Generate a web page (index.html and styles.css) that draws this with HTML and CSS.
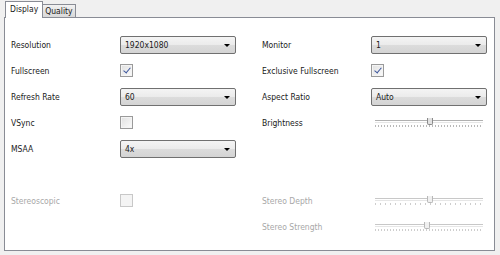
FILE: index.html
```html
<!DOCTYPE html>
<html lang="en">
<head>
    <meta charset="UTF-8">
    <title>Display Settings</title>
    <link rel="stylesheet" href="styles.css">
</head>
<body>
    <div class="window">
        <div class="tabs">
            <div class="tab active">Display</div>
            <div class="tab">Quality</div>
        </div>
        <div class="pane">
            <div class="label">Resolution</div>
            <div class="combo">1920x1080</div>
            <div class="spacer"></div>
            <div class="label">Monitor</div>
            <div class="combo">1</div>

            <div class="label">Fullscreen</div>
            <div class="cell"><span class="check checked"></span></div>
            <div class="spacer"></div>
            <div class="label">Exclusive Fullscreen</div>
            <div class="cell"><span class="check checked"></span></div>

            <div class="label">Refresh Rate</div>
            <div class="combo">60</div>
            <div class="spacer"></div>
            <div class="label">Aspect Ratio</div>
            <div class="combo">Auto</div>

            <div class="label">VSync</div>
            <div class="cell"><span class="check"></span></div>
            <div class="spacer"></div>
            <div class="label">Brightness</div>
            <div class="cell"><div class="slider dense"><span class="thumb" style="left: 50%"></span></div></div>

            <div class="label">MSAA</div>
            <div class="combo">4x</div>
            <div class="spacer"></div>
            <div class="label"></div>
            <div class="cell"></div>

            <div class="label"></div>
            <div class="cell"></div>
            <div class="spacer"></div>
            <div class="label"></div>
            <div class="cell"></div>

            <div class="label disabled">Stereoscopic</div>
            <div class="cell"><span class="check disabled"></span></div>
            <div class="spacer"></div>
            <div class="label disabled">Stereo Depth</div>
            <div class="cell"><div class="slider sparse disabled"><span class="thumb" style="left: 50%"></span></div></div>

            <div class="label"></div>
            <div class="cell"></div>
            <div class="spacer"></div>
            <div class="label disabled">Stereo Strength</div>
            <div class="cell"><div class="slider dense disabled"><span class="thumb" style="left: 47%"></span></div></div>
        </div>
    </div>
</body>
</html>
```
FILE: styles.css
```css
body {
    margin: 0;
    background-color: #f0f0f0;
    font-family: Tahoma, "DejaVu Sans Condensed", "Liberation Sans", sans-serif;
    font-size: 8.5px;
    color: #1a1a1a;
}
.window {
    padding: 1px 5px 4px 4px;
}
.tabs {
    display: flex;
    align-items: flex-end;
    height: 16px;
    padding-left: 1px;
}
.tab {
    height: 12px;
    line-height: 12px;
    padding: 0 2px;
    border: 1px solid #898c95;
    border-bottom: none;
    background: linear-gradient(#f2f2f2, #e3e3e3 50%, #d9d9d9);
    margin-left: -1px;
}
.tab.active {
    height: 16px;
    line-height: 15px;
    padding: 0 4px;
    background: #fff;
    margin-left: 0;
    margin-bottom: -1px;
    position: relative;
    z-index: 1;
}
.pane {
    background: #fff;
    border: 1px solid #898c95;
    padding: 14px 0 10px 6px;
    display: grid;
    grid-template-columns: 109px 116px 26px 109px 116px;
    grid-auto-rows: 26px;
    height: 208px;
}
.label {
    display: flex;
    align-items: center;
    white-space: nowrap;
}
.label.disabled {
    color: #a8a8a8;
}
.cell {
    display: flex;
    align-items: center;
}
.combo {
    align-self: center;
    height: 16px;
    line-height: 16px;
    padding-left: 4px;
    border: 1px solid #707070;
    border-radius: 2px;
    background: linear-gradient(#f4f4f4, #ebebeb 50%, #dcdcdc 51%, #d4d4d4);
    position: relative;
}
.combo::after {
    content: "";
    position: absolute;
    right: 5px;
    top: 7px;
    border-left: 3px solid transparent;
    border-right: 3px solid transparent;
    border-top: 3px solid #000;
}
.check {
    width: 11px;
    height: 11px;
    border: 1px solid #9a9a9a;
    background: linear-gradient(135deg, #e0e0e0, #fbfbfb);
    box-shadow: inset 0 0 0 1px #f4f4f4;
    position: relative;
    top: -1px;
}
.check.checked::after {
    content: "";
    position: absolute;
    left: 4px;
    top: 1px;
    width: 3px;
    height: 6px;
    border-right: 1.5px solid #3d569c;
    border-bottom: 1.5px solid #3d569c;
    transform: rotate(40deg);
}
.check.disabled {
    border-color: #c8c8c8;
    background: #f4f4f4;
}
.slider {
    width: 108px;
    height: 10px;
    margin-left: 4px;
    position: relative;
}
.slider::before {
    content: "";
    position: absolute;
    left: 0;
    right: 0;
    top: 2px;
    height: 1px;
    border-top: 1px solid #b0b0b0;
    border-bottom: 1px solid #e6e6e6;
}
.slider::after {
    content: "";
    position: absolute;
    left: 0;
    right: 0;
    top: 7px;
    height: 2px;
    background: repeating-linear-gradient(90deg, #b8b8b8 0 1px, transparent 1px 3px);
}
.slider.sparse::after {
    background: repeating-linear-gradient(90deg, #b8b8b8 0 1px, transparent 1px 5px);
}
.slider.disabled::before {
    border-top-color: #c8c8c8;
}
.slider.disabled::after {
    opacity: 0.7;
}
.thumb {
    position: absolute;
    top: 0;
    width: 4px;
    height: 6px;
    margin-left: -2px;
    background: #e2e2e2;
    border: 1px solid #8a8a8a;
    border-top: none;
    border-radius: 0 0 2px 2px;
    z-index: 1;
}
.slider.disabled .thumb {
    border-color: #b8b8b8;
    background: #f0f0f0;
}
```
